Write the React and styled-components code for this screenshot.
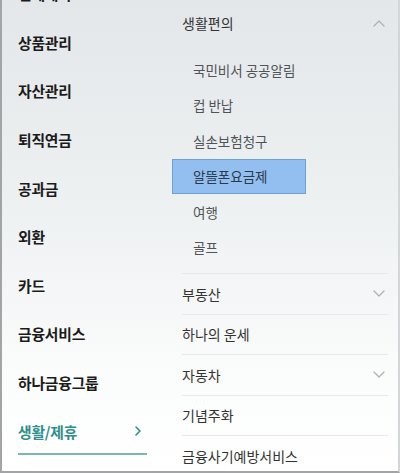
import React from "react";
import styled, { createGlobalStyle } from "styled-components";

const GlobalStyle = createGlobalStyle`
  html, body {
    margin: 0;
    padding: 0;
  }
  body {
    font-family: "Noto Sans CJK KR", "Noto Sans", sans-serif;
    -webkit-font-smoothing: antialiased;
  }
`;

const leftMenu = [
  "전체계좌",
  "상품관리",
  "자산관리",
  "퇴직연금",
  "공과금",
  "외환",
  "카드",
  "금융서비스",
  "하나금융그룹",
];

const subItems = ["국민비서 공공알림", "컵 반납", "실손보험청구", "알뜰폰요금제", "여행", "골프"];

const rows = [
  { label: "부동산", more: true },
  { label: "하나의 운세" },
  { label: "자동차", more: true },
  { label: "기념주화" },
  { label: "금융사기예방서비스" },
];

function Chevron({ up }) {
  return (
    <svg width="12" height="7" viewBox="0 0 12 7" fill="none">
      <path
        d={up ? "M1 6L6 1L11 6" : "M1 1L6 6L11 1"}
        stroke="#aab0b3"
        strokeWidth="1.2"
        strokeLinecap="round"
        strokeLinejoin="round"
      />
    </svg>
  );
}

function App() {
  return (
    <>
      <GlobalStyle />
      <Frame>
        <LeftColumn>
          <LeftList>
            {leftMenu.map((name) => (
              <LeftItem key={name}>{name}</LeftItem>
            ))}
            <LeftItem active>
              생활/제휴
              <Arrow>
                <svg width="8" height="12" viewBox="0 0 8 12" fill="none">
                  <path
                    d="M2 2L6 6L2 10"
                    stroke="#2f8f8b"
                    strokeWidth="1.6"
                    strokeLinecap="round"
                    strokeLinejoin="round"
                  />
                </svg>
              </Arrow>
            </LeftItem>
          </LeftList>
        </LeftColumn>

        <RightColumn>
          <Group>
            <GroupHeader>
              생활편의
              <Chevron up />
            </GroupHeader>
            <SubList>
              {subItems.map((item) => (
                <SubItem key={item} selected={item === "알뜰폰요금제"}>
                  {item}
                </SubItem>
              ))}
            </SubList>
          </Group>
          {rows.map((row) => (
            <Row key={row.label}>
              {row.label}
              {row.more && <Chevron />}
            </Row>
          ))}
        </RightColumn>
      </Frame>
    </>
  );
}

const Frame = styled.div`
  width: 400px;
  height: 473px;
  box-sizing: border-box;
  overflow: hidden;
  display: grid;
  grid-template-columns: 162px 1fr;
  background: linear-gradient(to bottom, #e3e7e9 0%, #eef1f2 45%, #fbfcfc 80%, #ffffff 100%);
  border-left: 2px solid #a2a4a5;
  border-bottom: 2px solid #a2a4a5;
  border-right: 2px solid #d2d6d8;
`;

const LeftColumn = styled.div`
  padding: 0 17px 0 16px;
`;

const LeftList = styled.div`
  margin-top: -30.5px;
`;

const LeftItem = styled.div`
  height: 48.6px;
  box-sizing: border-box;
  display: flex;
  align-items: center;
  justify-content: space-between;
  font-size: 14.8px;
  font-weight: 700;
  letter-spacing: -0.2px;
  color: ${(p) => (p.active ? "#2f8f8b" : "#1b1b1b")};
  border-bottom: 2px solid ${(p) => (p.active ? "#7fb6b1" : "transparent")};
  padding-top: 2px;
`;

const Arrow = styled.span`
  display: flex;
  margin-right: 5px;
`;

const RightColumn = styled.div`
  padding: 0 10px 0 18px;
`;

const Group = styled.div`
  border-bottom: 1px solid #e4e8ea;
  padding-bottom: 8px;
`;

const GroupHeader = styled.div`
  height: 46px;
  display: flex;
  align-items: center;
  justify-content: space-between;
  padding-right: 3px;
  font-size: 14px;
  color: #333;
`;

const SubList = styled.div`
  margin-top: 6px;
  margin-left: -10px;
`;

const SubItem = styled.div`
  width: 134px;
  height: 35.5px;
  box-sizing: border-box;
  display: flex;
  align-items: center;
  padding-left: 20px;
  font-size: 13.5px;
  color: ${(p) => (p.selected ? "#2a3a4a" : "#505458")};
  background: ${(p) => (p.selected ? "#92bff0" : "transparent")};
  border: 1px solid ${(p) => (p.selected ? "#6f9fd3" : "transparent")};
`;

const Row = styled.div`
  height: 40.5px;
  box-sizing: border-box;
  display: flex;
  align-items: center;
  justify-content: space-between;
  padding-right: 3px;
  font-size: 14px;
  color: #333;
  border-bottom: 1px solid #e6eaec;
`;

export default App;
